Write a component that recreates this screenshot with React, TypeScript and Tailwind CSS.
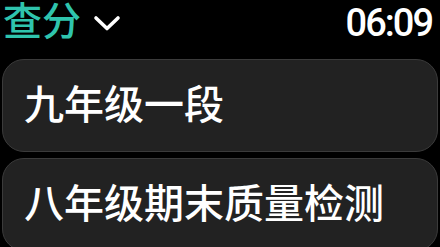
const CJK = "font-['Roboto','Noto_Sans_CJK_SC',sans-serif]";

function Chevron() {
    return (
        <svg width="28" height="18" viewBox="0 0 28 18" className="ml-[12px] mt-[2px]">
            <polyline points="3,4 14,14.5 25,4" fill="none" stroke="#ffffff" strokeWidth="3.6"
                      strokeLinecap="round" strokeLinejoin="round"/>
        </svg>
    );
}

function ExamCard({title}: { title: string }) {
    return (
        <div
            className="mx-[2px] h-[93px] shrink-0 flex items-center px-[21px] rounded-[22px] bg-[#222222] border border-[#3b3b3b]">
            <span className={`${CJK} font-medium text-[40px] leading-none text-white whitespace-nowrap`}>{title}</span>
        </div>
    );
}

export default function App() {
    const exams = ["九年级一段", "八年级期末质量检测"];

    return (
        <div className="w-[440px] h-[247px] bg-black overflow-hidden flex flex-col">
            {/* Header */}
            <div className="h-[44px] shrink-0 flex items-center justify-between pl-[3px] pr-[8px]">
                <div className="flex items-center">
                    <span className={`${CJK} font-medium text-[39px] leading-none text-[#2fc4ad]`}>查分</span>
                    <Chevron/>
                </div>
                <span
                    className="font-['Roboto',sans-serif] font-medium text-[38px] leading-none text-white tracking-[-2px] mt-[2px]">
                    06:09
                </span>
            </div>

            {/* Exam list */}
            <div className="mt-[15px] flex flex-col gap-[6px]">
                {exams.map((e) => (
                    <ExamCard key={e} title={e}/>
                ))}
            </div>
        </div>
    );
}
